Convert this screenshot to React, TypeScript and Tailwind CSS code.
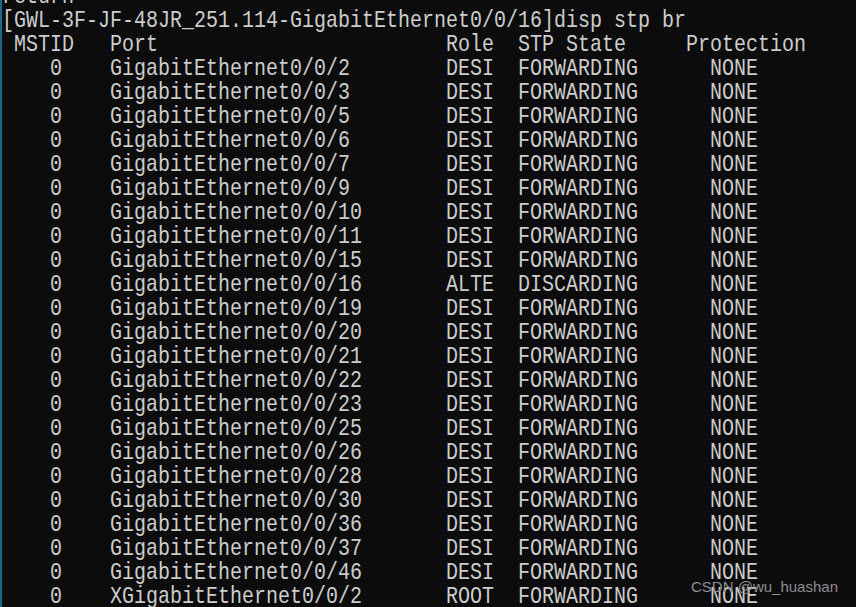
import React from "react";

const ports: [string, string, string][] = [
  ["GigabitEthernet0/0/2", "DESI", "FORWARDING"],
  ["GigabitEthernet0/0/3", "DESI", "FORWARDING"],
  ["GigabitEthernet0/0/5", "DESI", "FORWARDING"],
  ["GigabitEthernet0/0/6", "DESI", "FORWARDING"],
  ["GigabitEthernet0/0/7", "DESI", "FORWARDING"],
  ["GigabitEthernet0/0/9", "DESI", "FORWARDING"],
  ["GigabitEthernet0/0/10", "DESI", "FORWARDING"],
  ["GigabitEthernet0/0/11", "DESI", "FORWARDING"],
  ["GigabitEthernet0/0/15", "DESI", "FORWARDING"],
  ["GigabitEthernet0/0/16", "ALTE", "DISCARDING"],
  ["GigabitEthernet0/0/19", "DESI", "FORWARDING"],
  ["GigabitEthernet0/0/20", "DESI", "FORWARDING"],
  ["GigabitEthernet0/0/21", "DESI", "FORWARDING"],
  ["GigabitEthernet0/0/22", "DESI", "FORWARDING"],
  ["GigabitEthernet0/0/23", "DESI", "FORWARDING"],
  ["GigabitEthernet0/0/25", "DESI", "FORWARDING"],
  ["GigabitEthernet0/0/26", "DESI", "FORWARDING"],
  ["GigabitEthernet0/0/28", "DESI", "FORWARDING"],
  ["GigabitEthernet0/0/30", "DESI", "FORWARDING"],
  ["GigabitEthernet0/0/36", "DESI", "FORWARDING"],
  ["GigabitEthernet0/0/37", "DESI", "FORWARDING"],
  ["GigabitEthernet0/0/46", "DESI", "FORWARDING"],
  ["XGigabitEthernet0/0/2", "ROOT", "FORWARDING"],
];

const lines: string[] = [
  "return",
  "[GWL-3F-JF-48JR_251.114-GigabitEthernet0/0/16]disp stp br",
  " MSTID   Port                        Role  STP State     Protection",
  ...ports.map(
    ([p, r, s]) => "    0    " + p.padEnd(28, " ") + r + "  " + s.padEnd(16, " ") + "NONE"
  ),
];

export default function App() {
  return (
    <div className="relative w-[856px] h-[607px] overflow-hidden bg-[#0c0c0c] border-l-2 border-[#1d6a86]">
      <pre className="mt-[-15px] origin-left scale-x-[0.8333] font-['Liberation_Mono',monospace] text-[24px] leading-[24px] text-[#cccccc] whitespace-pre">
        {lines.join("\n")}
      </pre>
      <div className="absolute left-[689px] top-[577px] font-['Liberation_Sans',Arial,sans-serif] text-[15px] leading-[20px] text-[#8e8e8e]">
        CSDN @wu_huashan
      </div>
    </div>
  );
}
